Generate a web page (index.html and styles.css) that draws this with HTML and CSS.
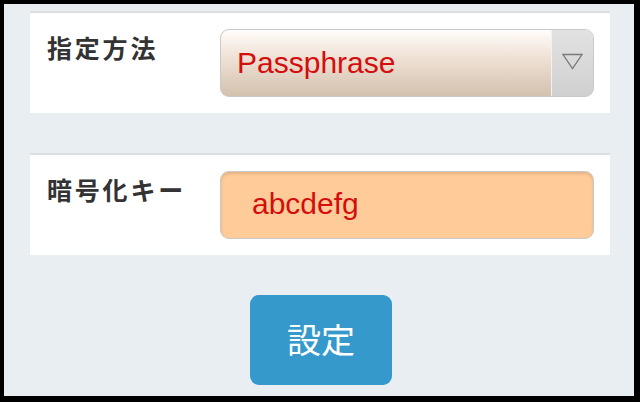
FILE: index.html
```html
<!DOCTYPE html>
<html lang="ja">
<head>
<meta charset="utf-8">
<link rel="stylesheet" href="styles.css">
</head>
<body>
<div class="frame">
  <section class="panel">
    <div class="label">指定方法</div>
    <div class="select">
      <span class="select-value">Passphrase</span>
      <span class="select-btn">
        <svg width="21" height="17" viewBox="0 0 21 17"><polygon points="1,1.5 20,1.5 10.5,15.5" fill="none" stroke="#7a7a7a" stroke-width="1.3" stroke-linejoin="miter"/></svg>
      </span>
    </div>
  </section>
  <section class="panel">
    <div class="label">暗号化キー</div>
    <div class="input">abcdefg</div>
  </section>
  <div class="actions">
    <button class="btn">設定</button>
  </div>
</div>
</body>
</html>
```
FILE: styles.css
```css
html, body {
  margin: 0;
  padding: 0;
  background: #000;
}
body {
  width: 640px;
  height: 402px;
  overflow: hidden;
  font-family: "Liberation Sans", "Noto Sans CJK JP", sans-serif;
}
.frame {
  margin: 4px 6px 0 4px;
  height: 392px;
  background: #e8eef1;
  padding: 7px 24px 0 26px;
  box-sizing: border-box;
  display: flex;
  flex-direction: column;
  gap: 40px;
}
.panel {
  background: #fff;
  border-top: 2px solid #dcdfe1;
  padding: 16px 16px 16px 17px;
  display: flex;
  align-items: flex-start;
}
.label {
  width: 173px;
  flex: none;
  font-family: "Noto Sans CJK JP", sans-serif;
  font-weight: 700;
  font-size: 25px;
  letter-spacing: 2.8px;
  color: #333;
  line-height: 30px;
  margin-top: 3px;
}
.select {
  flex: 1;
  height: 68px;
  box-sizing: border-box;
  border: 1.5px solid #c9c9c9;
  border-radius: 9px;
  display: flex;
  overflow: hidden;
  background: linear-gradient(#fffdfb 0%, #f0e2d6 40%, #d3c1ae 100%);
}
.select-value {
  flex: 1;
  display: flex;
  align-items: center;
  padding-left: 16px;
  font-size: 30px;
  color: #d40d0d;
}
.select-btn {
  width: 41px;
  flex: none;
  display: flex;
  align-items: center;
  justify-content: center;
  background: linear-gradient(#e2e2e2, #d0d0d0);
  border-left: 1px solid #f2f2f2;
}
.select-btn svg {
  margin-top: -4px;
}
.input {
  flex: 1;
  height: 68px;
  box-sizing: border-box;
  border: 1.5px solid #c9c9c9;
  border-radius: 9px;
  background: #ffcc99;
  box-shadow: inset 0 2px 3px rgba(150, 100, 50, 0.25);
  display: flex;
  align-items: center;
  padding-left: 31px;
  padding-bottom: 2px;
  font-size: 30px;
  color: #d40d0d;
}
.actions {
  display: flex;
  justify-content: center;
  padding-left: 2px;
}
.btn {
  width: 142px;
  height: 90px;
  border: none;
  border-radius: 9px;
  background: #3599cc;
  color: #fff;
  font-family: "Noto Sans CJK JP", sans-serif;
  font-size: 34px;
  font-weight: 400;
  padding: 0 0 4px 0;
}
```
